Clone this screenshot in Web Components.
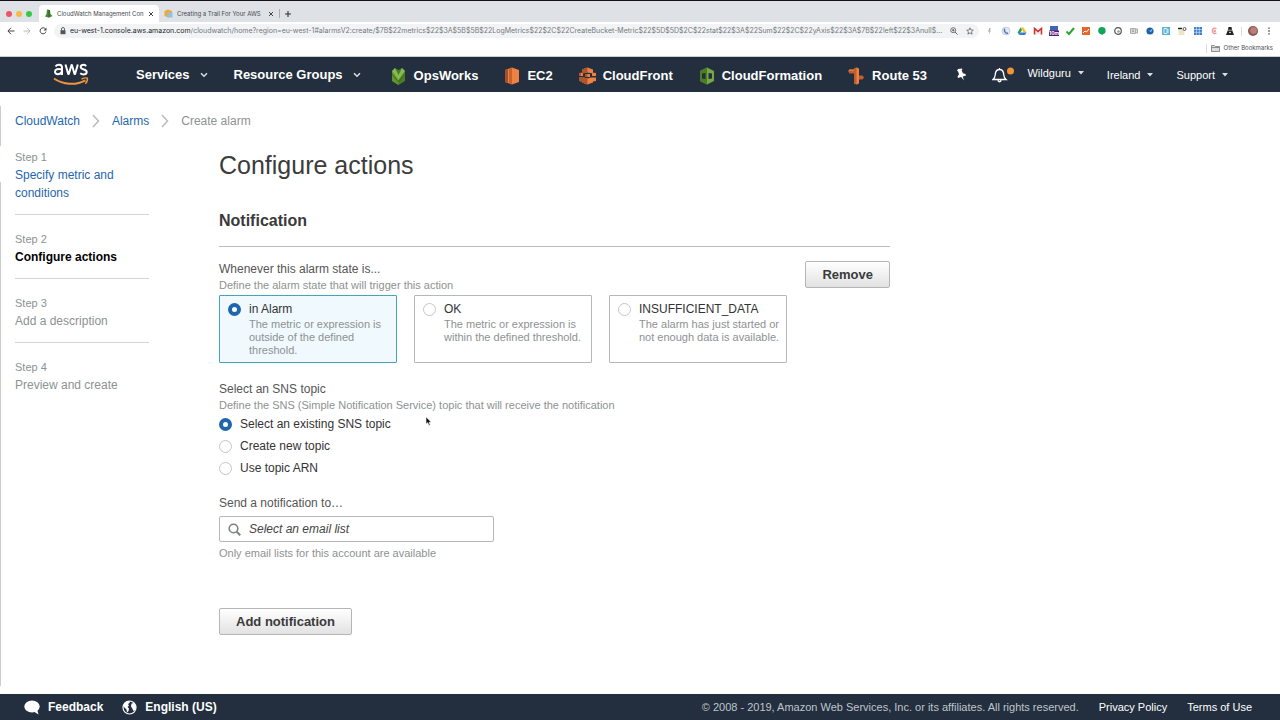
<!DOCTYPE html>
<html lang="en">
<head>
<meta charset="utf-8">
<title>CloudWatch Management Console</title>
<style>
  body {
    margin: 0;
    min-height: 100vh;
    display: flex;
    flex-direction: column;
    background: #fff;
    color: #444;
    font: 12px/16px "Liberation Sans", Arial, sans-serif;
    --link: #1f66ad;
    --navy: #232f3e;
    --muted: #8d9292;
  }
  main {
    flex: 1;
    box-sizing: border-box;
    padding: 20px 15px 40px;
    background:
      linear-gradient(#ccc, #ccc) 0 14px / 1px 40px no-repeat,
      linear-gradient(#ccc, #ccc) 0 90px / 1px calc(100% - 98px) no-repeat;
  }
  .columns {
    display: grid;
    grid-template-columns: 134px minmax(0, 671px);
    gap: 70px;
    margin-top: 18px;
  }
  h1 { margin: 2px 0 0; font-size: 25px; line-height: 30px; font-weight: 400; color: #3c3c3c; }
</style>
</head>
<body>
<browser-chrome></browser-chrome>
<console-nav></console-nav>
<main>
  <crumb-trail></crumb-trail>
  <div class="columns">
    <wizard-steps>
      <wizard-step label="Step 1" state="done">Specify metric and conditions</wizard-step>
      <wizard-step label="Step 2" state="current">Configure actions</wizard-step>
      <wizard-step label="Step 3">Add a description</wizard-step>
      <wizard-step label="Step 4">Preview and create</wizard-step>
    </wizard-steps>
    <section>
      <h1>Configure actions</h1>
      <notification-form></notification-form>
    </section>
  </div>
</main>
<console-footer></console-footer>
<mouse-pointer></mouse-pointer>

<script>
const define = (name, html) => customElements.define(name, class extends HTMLElement {
  constructor() {
    super();
    this.attachShadow({ mode: 'open' }).innerHTML = html;
  }
});

const extensions = [
  ['Flash', '<path d="M4.500 2 3 5.500h1.500L4 8.500 6 4.500H4.800L5.800 2z" fill="#aaa"/>'],
  ['Phone', '<circle cx="5" cy="5" r="4" fill="#e3e9f4" stroke="#c3cfe4"/><path d="M3.500 2.500c-.5 3 1 5 3.500 4.800" fill="none" stroke="#4974b8" stroke-width="1.400"/>'],
  ['Drive', '<path d="M3.500 1.500h3L9.500 6.500h-3z" fill="#f6c12c"/><path d="M3.500 1.500 5 4 2.200 9 .6 6.500z" fill="#1da261"/><path d="M3.600 6.500h5.900L8 9H2.200z" fill="#3a78e7"/>'],
  ['Mail', '<path d="M1 2h8v6.500H1z" fill="#f1e9e8"/><path d="M1.500 8.500V2.500L5 5.500l3.500-3v6" fill="none" stroke="#c9302c" stroke-width="1.500"/>'],
  ['Timer', '<path d="M1 0h8v5H1z" fill="#4264b5"/><path d="M0 4.500h10V10H0z" fill="#5a1a78"/>', '10m'],
  ['Check', '<path d="M1.500 5.500 4 8 9 2" fill="none" stroke="#2fa52f" stroke-width="2"/>'],
  ['Analytics', '<path d="M1 1h8v8H1z" fill="#e8642c"/><path d="M2 7l2-2 1.500 1L8 3" fill="none" stroke="#fff"/>'],
  ['Hangouts', '<path d="M5 1a3.700 3.700 0 0 1 .8 7.300L4.800 9.500V8.400A3.700 3.700 0 0 1 5 1z" fill="#14a55c"/>'],
  ['Lens', '<circle cx="5" cy="5" r="3.300" fill="#fff" stroke="#555" stroke-width="1.200"/><circle cx="5.500" cy="5.500" r="1.300" fill="#999"/>'],
  ['Reader', '<path d="M1.500 2.500h5v5h-5zM7 3h1.500v4H7" fill="#ddd" stroke="#aaa"/><path d="M3 4h2M3 5.500h2" stroke="#888" stroke-width=".7"/>'],
  ['Globe', '<circle cx="5" cy="5" r="3.600" fill="#1d5fa8"/><path d="M2 3.500 5 5l3-3-2 4z" fill="#b4dcf2"/>'],
  ['Profile', '<path d="M1 1h8v8H1z" fill="#59b2d8"/><path d="M3 2.500h3v5H3zM7 3v4" fill="none" stroke="#fff" stroke-width=".8"/>'],
  ['Glasses', '<path d="M1.500 4h6v5h-6z" fill="#eee4c8"/><path d="M1 2.500h4" stroke="#222" stroke-width="1.500"/><circle cx="7.500" cy="3" r="1.500" fill="#fff" stroke="#333" stroke-width=".8"/>'],
  ['Grid', '<path d="M1 1h8v8H1z" fill="#3b7fd0"/><path d="M3.500 1v8M6.300 1v8M1 3.500h8M1 6.300h8" stroke="#fff" stroke-width=".5"/>'],
  ['Clip', '<path d="M7.500 2.500C4 1 2.500 4 3.500 6s2.500 2 4 1M7 4.200H5v1.600h2" fill="none" stroke="#ef8f8f" stroke-width="1.100"/>'],
  ['Incognito', '<path d="M3.500 1h3l.6 3L9 9H1l1.900-5z" fill="#222"/><path d="M3 4.200h4" stroke="#fff" stroke-width=".6"/><circle cx="5" cy="6.500" r=".8" fill="#fff"/>'],
].map(([name, art, badge]) =>
  `<button aria-label="${name}"><svg width="10" height="10" viewBox="0 0 10 10">${art}</svg>${badge ? `<b>${badge}</b>` : ''}</button>`).join('');

define('browser-chrome', `
<style>
  :host { display: block; font: 7px/14px Inter, sans-serif; color: #45494d; border-bottom: 1px solid #c9cfcf; }
  button { position: relative; display: grid; place-items: center; width: 16px; height: 16px; padding: 0; border: 0; background: none; color: inherit; font: inherit; }
  .strip { display: flex; align-items: center; height: 17px; padding: 4px 0 0; border-top: 1px solid #111; background: #dee1e6; }
  .lights { display: flex; gap: 4px; width: 33px; padding-left: 6px; }
  .lights i { width: 6px; height: 6px; border-radius: 50%; background: #ed5565; }
  .lights i:nth-child(2) { background: #f6bb42; }
  .lights i:nth-child(3) { background: #3ac749; }
  .tab { display: flex; align-items: center; box-sizing: border-box; width: 120px; height: 17px; padding-left: 5px; border-radius: 4px 4px 0 0; }
  .tab.active { background: #fff; }
  .tab .title { flex: 1; width: auto; min-width: 0; display: block; margin-left: 4px; text-align: left; font-size: 6px; line-height: 16px; white-space: nowrap; }
  .line { width: 1px; height: 9px; background: #a9adb2; }
  .bar { display: flex; align-items: center; height: 18px; padding: 0 3px; }
  .omni { flex: 1; min-width: 0; display: flex; align-items: center; height: 14px; margin: 0 3px; padding-left: 6px; border-radius: 7px; background: #f1f3f4; }
  .omni label { margin-left: 4px; color: #24272a; }
  .omni input { flex: 1; min-width: 0; padding: 0; border: 0; background: none; color: #74797d; font: inherit; text-overflow: ellipsis; outline: 0; }
  .omni button:last-child { margin-right: 1px; }
  b { position: absolute; left: 3px; top: 8px; font-size: 5px; line-height: 5px; color: #fff; }
  .marks { display: flex; justify-content: flex-end; align-items: center; gap: 4px; height: 16px; padding-right: 7px; }
  .marks a { display: flex; align-items: center; gap: 4px; color: #4a4e52; text-decoration: none; font-size: 6px; }
  .avatar { width: 10px; height: 10px; border-radius: 50%; background: radial-gradient(circle at 55% 45%, #b98078 0 35%, #7f4a48 60%, #8fa0a8); }
</style>
<div class="strip">
  <div class="lights"><i></i><i></i><i></i></div>
  <div class="tab active">
    <svg width="9" height="9" viewBox="0 0 9 9"><path d="M3 .5 6 1l.5 4L8.500 7 5 8.800 1 7.500 2.500 5z" fill="#4b8a35"/><path d="M5 1v7" stroke="#2d5d20"/></svg>
    <button class="title">CloudWatch Management Con</button>
    <button aria-label="Close tab"><svg width="6" height="6" viewBox="0 0 6 6"><path d="m1 1 4 4M5 1 1 5" stroke="#444"/></svg></button>
  </div>
  <div class="tab">
    <svg width="9" height="9" viewBox="0 0 9 9"><path d="M.5 2 4 .5 8 2v5L4.500 8.500.5 7z" fill="#f0a63a"/><path d="M3.500 3.500h5v5h-5z" fill="#8fc4da"/></svg>
    <button class="title">Creating a Trail For Your AWS</button>
    <button aria-label="Close tab"><svg width="6" height="6" viewBox="0 0 6 6"><path d="m1 1 4 4M5 1 1 5" stroke="#444"/></svg></button>
  </div>
  <span class="line"></span>
  <button aria-label="New tab"><svg width="8" height="8" viewBox="0 0 8 8"><path d="M4 1v6M1 4h6" stroke="#333" stroke-width="1.100"/></svg></button>
</div>
<div class="bar">
  <button aria-label="Back"><svg width="8" height="8" viewBox="0 0 8 8"><path d="M4 .8.9 4 4 7.200M1 4h6.500" fill="none" stroke="#444"/></svg></button>
  <button aria-label="Forward"><svg width="8" height="8" viewBox="0 0 8 8"><path d="M4 .8 7.100 4 4 7.200M7 4H.5" fill="none" stroke="#bbb"/></svg></button>
  <button aria-label="Reload"><svg width="8" height="8" viewBox="0 0 8 8"><path d="M6.500 2A3 3 0 1 0 7 4.600" fill="none" stroke="#444"/><path d="M7.500.5v3h-3z" fill="#444"/></svg></button>
  <div class="omni">
    <svg width="6" height="8" viewBox="0 0 6 8"><path d="M.5 3.200h5v4h-5z" fill="#555"/><path d="M1.500 3.500V2a1.500 1.500 0 0 1 3 0v1.500" fill="none" stroke="#555" stroke-width=".9"/></svg>
    <label for="url">eu-west-1.console.aws.amazon.com</label>
    <input id="url" value="/cloudwatch/home?region=eu-west-1#alarmsV2:create/$7B$22metrics$22$3A$5B$5B$22LogMetrics$22$2C$22CreateBucket-Metric$22$5D$5D$2C$22stat$22$3A$22Sum$22$2C$22yAxis$22$3A$7B$22left$22$3Anull$…">
    <button aria-label="Zoom"><svg width="8" height="8" viewBox="0 0 8 8"><circle cx="3.200" cy="3.200" r="2.500" fill="none" stroke="#555" stroke-width=".8"/><path d="M2 3.200h2.400M3.200 2v2.400M5 5l2.500 2.500" stroke="#555" stroke-width=".9"/></svg></button>
    <button aria-label="Bookmark"><svg width="8" height="8" viewBox="0 0 8 8"><path d="m4 .8.9 2.200 2.400.2-1.800 1.600.6 2.400L4 5.900 1.900 7.200l.6-2.400L.7 3.200 3.100 3z" fill="none" stroke="#555" stroke-width=".7"/></svg></button>
  </div>
  ${extensions}
  <span class="line" style="background:#ddd;margin:0 3px"></span>
  <button aria-label="Account"><span class="avatar"></span></button>
  <button aria-label="Menu"><svg width="2" height="8" viewBox="0 0 2 8"><path d="M.2.4h1.600v1.400H.2zM.2 3.300h1.600v1.400H.2zM.2 6.200h1.600v1.400H.2z" fill="#555"/></svg></button>
</div>
<div class="marks"><span class="line" style="background:#ddd"></span>
  <a href="#"><svg width="9" height="8" viewBox="0 0 9 8"><path d="M.5 1.500h3l1 1h4v5h-8zM.5 3.500h8" fill="#ddd" stroke="#777" stroke-width=".8"/></svg>Other Bookmarks</a>
</div>`);

/* Service shortcut: the icon goes in the "icon" slot, its name in the default one. */
define('nav-shortcut', `
<style>
  :host { display: block; }
  a { display: flex; align-items: center; gap: 7px; color: #fff; text-decoration: none; }
</style>
<a href="#"><slot name="icon"></slot><span><slot></slot></span></a>`);

define('nav-menu', `
<style>
  :host { display: block; }
  button { display: flex; align-items: center; gap: var(--caret-gap, 10px); padding: 0; border: 0; background: none; color: #fff; font: inherit; white-space: nowrap; }
  .solid { display: none; }
  :host([small]) { font-size: 11px; font-weight: 400; --caret-gap: 7px; }
  :host([small]) .solid { display: block; }
  :host([small]) .open { display: none; }
</style>
<button><slot></slot>
  <svg class="open" width="8" height="6" viewBox="0 0 8 6"><path d="m1 1.200 3 3 3-3" fill="none" stroke="#ddd" stroke-width="1.500"/></svg>
  <svg class="solid" width="6" height="4" viewBox="0 0 6 4"><path d="M0 0h6L3 3.500z" fill="#ddd"/></svg>
</button>`);

define('console-nav', `
<style>
  :host { display: flex; align-items: center; height: 35px; box-sizing: border-box; padding: 0 52px 0 53px; background: var(--navy); color: #fff; font-size: 13px; font-weight: 700; line-height: 18px; }
  svg { display: block; flex: none; }
  .logo { width: 36px; margin-right: 47px; }
  .menus { display: flex; gap: 26px; }
  .shortcuts { display: flex; gap: 26px; margin-left: 29px; padding-top: 2px; white-space: nowrap; }
  .account { display: flex; align-items: center; gap: 23px; margin-left: auto; }
  .account nav-menu:first-of-type { padding-bottom: 4px; }
  button { padding: 0; border: 0; background: none; }
  .pin { margin-right: 2px; }
  .bell { margin-right: -10px; }
</style>
<a class="logo" href="#" aria-label="AWS home"><svg width="36" height="24" viewBox="0 0 36 24">
  <g fill="none" stroke="#fff" stroke-width="2" stroke-linejoin="round">
    <path d="M2.500 3.500C4 1.300 9 1 9 4.500V12M9 6.500C5 5.500 2 6.200 2 8.800c0 3.200 5.500 3.200 7-.3"/>
    <path d="m12.500 1.500 2.700 9.500h.6L18.500 2h.4l2.600 9h.6l2.700-9.500"/>
    <path d="M33.300 3C31 1.200 27.700 1.500 27.700 4c0 3.200 6 1.800 6 4.900 0 2.900-4 3.200-6.500 1.300"/>
  </g>
  <path d="M1 15.500c9 6.500 22 7 31.500 1.800" fill="none" stroke="#f0953a" stroke-width="2"/>
  <path d="M28.500 16c3-1.300 5-1.200 5.800-.8.400 1.300-.2 3.600-2 5.600" fill="none" stroke="#f0953a" stroke-width="1.500"/>
</svg></a>
<div class="menus"><nav-menu>Services</nav-menu><nav-menu>Resource Groups</nav-menu></div>
<div class="shortcuts">
  <nav-shortcut><svg slot="icon" width="17" height="18" viewBox="0 0 17 18"><path d="m2 4 3-3 3.500 2L12 1l3 3v10l-6.500 4L2 14z" fill="#4d7c26"/><path d="m2 4 6.500 8v6L2 14z" fill="#5f962f"/><path d="m5 1 3.500 7L12 1l3 3-6.500 9L2 4z" fill="#86b853"/><path d="m2 7 6.500 8L15 7" fill="none" stroke="#3f6b20"/></svg>OpsWorks</nav-shortcut>
  <nav-shortcut><svg slot="icon" width="16" height="18" viewBox="0 0 16 18"><path d="m1 3 7-2.500L15 3v12l-7 2.500L1 15z" fill="#ef8143"/><path d="m1 3 3-1v14l-3-1z" fill="#a3502a"/><path d="M5 2.200 8 .8v16.500l-3-1z" fill="#c9622f"/></svg>EC2</nav-shortcut>
  <nav-shortcut><svg slot="icon" width="17" height="18" viewBox="0 0 17 18"><path d="M3 2.500 8.500.5l5.500 2v4l-5.500-1-5.500 1zM0 6l4-.5V9H0zM13 5.500l4 .5v3h-4zM0 10.500h5l3.500 1 3.500-1h5V14l-3 .5v1l-5.500 2-5.500-2v-1L0 14zM6 7h5v3H6z" fill="#ef8143"/><path d="m3 2.500 5.500-2v5l-5.500 1zM0 10.500h5l3.500 1v6l-5.500-2v-1L0 14zM0 6l2 .3V9H0zM6 7h2.500v3H6z" fill="#b0562b"/></svg>CloudFront</nav-shortcut>
  <nav-shortcut><svg slot="icon" width="16" height="18" viewBox="0 0 16 18"><path d="m1 4 7-3.500L15 4v10l-7 3.500L1 14z" fill="#76a844"/><path d="m1 4 7-3.500v17L1 14z" fill="#4d7c26"/><path d="M3 6.500 6.500 6v6L3 11.500zM9.500 6l3.500.5v5l-3.500.5z" fill="#232f3e"/></svg>CloudFormation</nav-shortcut>
  <nav-shortcut><svg slot="icon" width="17" height="18" viewBox="0 0 17 18"><path d="M6 1.500 8.500.5l2.500 1v15l-2.500 1-2.500-1z" fill="#ef8143"/><path d="M6 1.500 8.500.5v17L6 16.500zM0 4l1.500-1.500H6v4H1.500zM11 8.500h3.500l1.500 2-1.500 2H11z" fill="#c05e2f"/><path d="M1.500 2.500H6v1.300H.5z" fill="#ef8143"/></svg>Route 53</nav-shortcut>
</div>
<div class="account">
  <button class="pin" aria-label="Pin shortcuts"><svg width="12" height="14" viewBox="0 0 12 14"><path d="m3 1 4-.5.3 1.200-.7.5 1.300 3 2.600.8.5 1.400-3.300 1L9 12.500 6.200 9 3 10l-.5-1.500L4 6.300l-1-3-1-.2z" fill="#fff"/></svg></button>
  <button class="bell" aria-label="Notifications"><svg width="22" height="16" viewBox="0 0 22 16"><path d="M1 12.500c2.500-2 2-4 2.500-6.500C4 3.500 5.500 2.500 7.500 2.500S11 3.500 11.500 6c.5 2.500 0 4.500 2.500 6.500zM7.500 2.500V1M6 13c0 2.300 3 2.300 3 0" fill="none" stroke="#fff" stroke-width="1.300"/><circle cx="18.500" cy="4" r="3.500" fill="#f59331"/></svg></button>
  <nav-menu small>Wildguru</nav-menu><nav-menu small>Ireland</nav-menu><nav-menu small>Support</nav-menu>
</div>`);

define('crumb-trail', `
<style>
  :host { display: block; line-height: 18px; color: var(--muted); }
  nav { display: flex; align-items: center; gap: 12px; }
  a { color: var(--link); text-decoration: none; }
</style>
<nav aria-label="Breadcrumb"><a href="#">CloudWatch</a>
<svg width="8" height="14" viewBox="0 0 8 14"><path d="m1 1 5.500 6L1 13" fill="none" stroke="#bbb" stroke-width="1.500"/></svg>
<a href="#">Alarms</a>
<svg width="8" height="14" viewBox="0 0 8 14"><path d="m1 1 5.500 6L1 13" fill="none" stroke="#bbb" stroke-width="1.500"/></svg>
<span>Create alarm</span></nav>`);

define('wizard-steps', `
<style>
  :host { display: block; }
  ::slotted(wizard-step:not(:last-child)) { padding-bottom: 12px; border-bottom: 1px solid #d2d5d5; margin-bottom: 15px; }
</style><slot></slot>`);

customElements.define('wizard-step', class extends HTMLElement {
  constructor() {
    super();
    this.attachShadow({ mode: 'open' }).innerHTML = `
<style>
  :host { display: block; line-height: 18px; color: var(--muted); }
  small { display: block; font-size: 11px; }
  :host([state="current"]) .name { color: #000; font-weight: 700; }
  a { color: var(--link); text-decoration: none; }
</style>
<small></small><div class="name"><slot></slot></div>`;
  }
  connectedCallback() {
    this.shadowRoot.querySelector('small').textContent = this.getAttribute('label');
    if (this.getAttribute('state') === 'done')
      this.shadowRoot.querySelector('.name').innerHTML = '<a href="#"><slot></slot></a>';
  }
});

define('push-button', `
<style>
  :host { display: inline-block; }
  button { height: 27px; padding: 0 16px; border: 1px solid #b4b6b6; border-radius: 2px; background: linear-gradient(#fff, #e2e2e2); color: #3a3a3a; font: 700 13px/16px "Liberation Sans", Arial, sans-serif; white-space: nowrap; }
</style><button><slot></slot></button>`);

define('notification-form', `
<style>
  :host { display: block; }
  h2 { margin: 31px 0 0; padding-bottom: 15px; border-bottom: 1px solid #b9bcbc; font-size: 16px; line-height: 20px; color: #3a3a3a; }
  .top { display: flex; justify-content: space-between; align-items: flex-start; margin-top: 14px; }
  fieldset { margin: 0; padding: 0; border: 0; min-width: 0; }
  legend { padding: 0; }
  legend, .field { display: block; color: #555; }
  .hint { margin: 0; font-size: 11px; line-height: 16px; color: var(--muted); }
  input[type=radio] { appearance: none; flex: none; box-sizing: border-box; width: 13px; height: 13px; margin: 0; border: 1px solid #c4c7c7; border-radius: 50%; background: #fff; }
  input[type=radio]:checked { border: 4px solid #1f66ad; }
  .cards { display: grid; grid-template-columns: repeat(3, 178px); gap: 17px; margin-top: 2px; }
  .cards label { display: grid; grid-template-columns: 13px 1fr; column-gap: 8px; align-content: start; align-items: center; box-sizing: border-box; min-height: 68px; padding: 5px 4px 5px 8px; border: 1px solid #b4b8b8; border-radius: 1px; color: #333; }
  .cards label:has(:checked) { border-color: #45a5b8; background: #f0f9fd; }
  .cards .hint { grid-column: 2; line-height: 13px; margin-top: 1px; }
  .list { margin-top: 18px; }
  .list label { display: flex; align-items: center; gap: 8px; height: 22px; color: #333; }
  .field { margin-top: 16px; }
  .search { display: flex; align-items: center; gap: 8px; box-sizing: border-box; width: 275px; height: 26px; margin: 5px 0 3px; padding: 0 8px; border: 1px solid #b4b8b8; border-radius: 2px; }
  .search input { flex: 1; min-width: 0; padding: 0; border: 0; outline: 0; background: none; font: italic 12px/16px "Liberation Sans", Arial, sans-serif; color: #444; }
  .search input::placeholder { color: #444; opacity: 1; }
  .add { display: block; margin-top: 47px; }
</style>
<h2>Notification</h2>
<div class="top">
  <fieldset>
    <legend>Whenever this alarm state is...</legend>
    <p class="hint">Define the alarm state that will trigger this action</p>
    <div class="cards">
      <label><input type="radio" name="state" checked>in Alarm<span class="hint">The metric or expression is outside of the defined threshold.</span></label>
      <label><input type="radio" name="state">OK<span class="hint">The metric or expression is within the defined threshold.</span></label>
      <label><input type="radio" name="state">INSUFFICIENT_DATA<span class="hint">The alarm has just started or not enough data is available.</span></label>
    </div>
  </fieldset>
  <push-button>Remove</push-button>
</div>
<fieldset class="list">
  <legend>Select an SNS topic</legend>
  <p class="hint">Define the SNS (Simple Notification Service) topic that will receive the notification</p>
  <label><input type="radio" name="topic" checked>Select an existing SNS topic</label>
  <label><input type="radio" name="topic">Create new topic</label>
  <label><input type="radio" name="topic">Use topic ARN</label>
</fieldset>
<label class="field" for="list">Send a notification to…</label>
<div class="search">
  <svg width="13" height="13" viewBox="0 0 13 13"><circle cx="5.500" cy="5.500" r="4.300" fill="none" stroke="#7d8181" stroke-width="1.600"/><path d="m8.700 8.700 3.500 3.500" stroke="#7d8181" stroke-width="2"/></svg>
  <input id="list" type="text" placeholder="Select an email list">
</div>
<p class="hint">Only email lists for this account are available</p>
<push-button class="add">Add notification</push-button>`);

define('console-footer', `
<style>
  :host { display: flex; align-items: center; gap: 19px; box-sizing: border-box; height: 26px; padding: 0 28px 0 24px; background: var(--navy); color: #bfc5cb; font-size: 11px; white-space: nowrap; }
  button { display: flex; align-items: center; gap: 8px; padding: 0; border: 0; background: none; color: #fff; font: 700 12px/16px "Liberation Sans", Arial, sans-serif; }
  .legal { display: flex; gap: 20px; margin-left: auto; }
  a { color: #fff; text-decoration: none; }
</style>
<button><svg width="16" height="15" viewBox="0 0 16 15"><ellipse cx="8" cy="6.500" rx="7.700" ry="6" fill="#fff"/><path d="m9 11 5.500 3.500L13 9z" fill="#fff"/></svg>Feedback</button>
<button><svg width="15" height="15" viewBox="0 0 15 15"><circle cx="7.500" cy="7.500" r="6.500" fill="#232f3e" stroke="#fff" stroke-width="1.200"/><path d="M2 3.500C4 1.500 6 1 8 1.300L7.500 3 6 4l1 1.500L5.500 7 7 8.500 6.500 11 5 12.500 4.500 9.500 2 7zM9.500 3.500 12 3l2 3.500-.5 3-2 1.500-1.500-3L9 6.500z" fill="#fff"/></svg>English (US)</button>
<div class="legal"><span>© 2008 - 2019, Amazon Web Services, Inc. or its affiliates. All rights reserved.</span><a href="#">Privacy Policy</a><a href="#">Terms of Use</a></div>`);

define('mouse-pointer', `
<style>:host { position: absolute; left: 425px; top: 416px; pointer-events: none; } svg { display: block; }</style>
<svg width="7" height="10" viewBox="0 0 7 10"><path d="M1 .8v7.400l1.700-1.600 1.200 2.800 1.300-.6L4 6.200h2.300z" fill="#111" stroke="#fff" stroke-width=".6"/></svg>`);
</script>
</body>
</html>
